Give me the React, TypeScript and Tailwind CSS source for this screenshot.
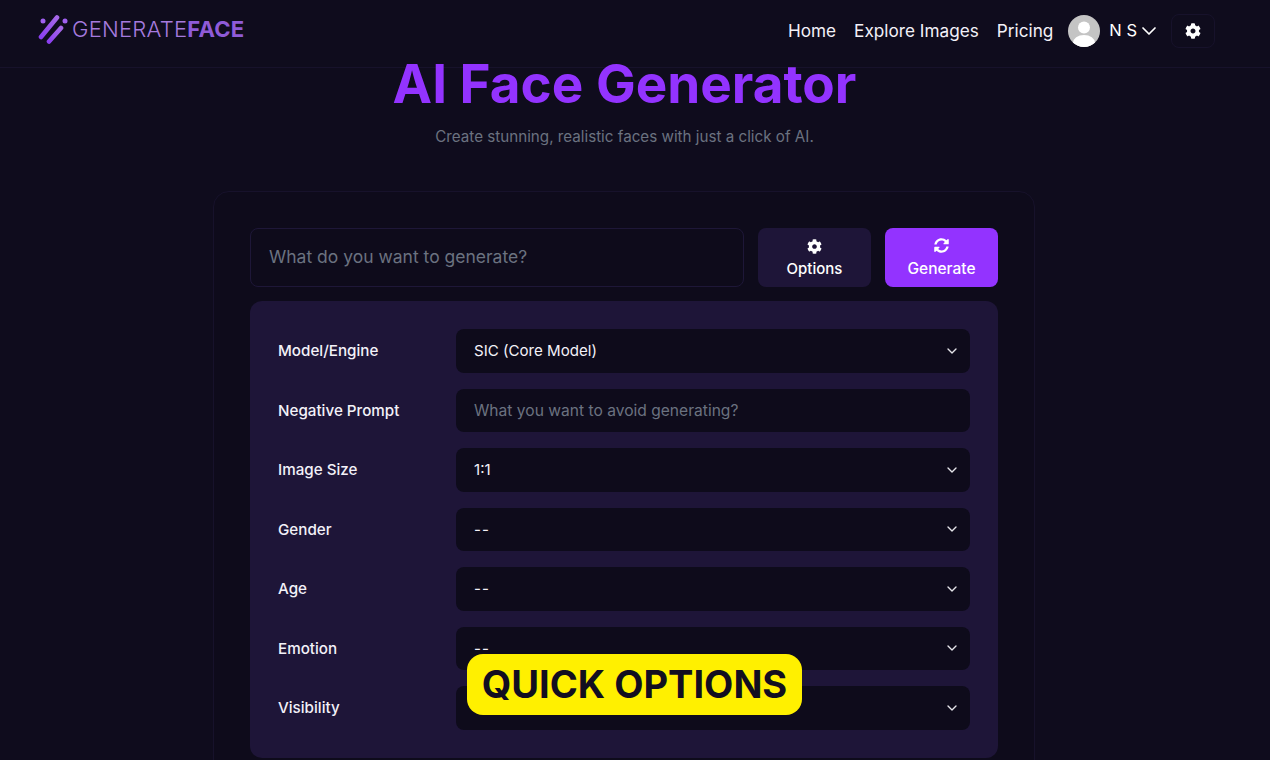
import { ChevronDown } from "lucide-react";
import { FaCog, FaSyncAlt } from "react-icons/fa";

const font = { fontFamily: "Inter, 'Noto Sans', sans-serif" };

function Logo() {
  return (
    <svg width="30" height="30" viewBox="0 0 30 30" className="shrink-0">
      <defs>
        <linearGradient id="lg" x1="0" y1="1" x2="1" y2="0">
          <stop offset="0" stopColor="#8b3ff0" />
          <stop offset="1" stopColor="#a668e8" />
        </linearGradient>
      </defs>
      <circle cx="5" cy="7" r="2.5" fill="#a060f0" />
      <circle cx="27" cy="7" r="2.5" fill="#a060f0" />
      <line x1="3" y1="23" x2="19" y2="3.5" stroke="url(#lg)" strokeWidth="4.6" strokeLinecap="round" />
      <line x1="11" y1="27.5" x2="23" y2="14" stroke="url(#lg)" strokeWidth="4.6" strokeLinecap="round" />
    </svg>
  );
}

function Avatar() {
  return (
    <svg width="32" height="32" viewBox="0 0 32 32" className="rounded-full shrink-0">
      <rect width="32" height="32" fill="#c4c4c4" />
      <circle cx="16" cy="12.5" r="6" fill="#fff" />
      <ellipse cx="16" cy="28" rx="11" ry="8" fill="#fff" />
    </svg>
  );
}

function Row({ label, value, placeholder }: { label: string; value?: string; placeholder?: string }) {
  return (
    <div className="flex items-center h-[43.5px]">
      <div className="w-[178px] pt-[2px] text-[15.2px] font-[450] text-[#f3f1f8]">{label}</div>
      <div className="flex-1 h-full rounded-lg bg-[#0e0b1b] flex items-center justify-between pl-[18px] pr-[10px] text-[15.1px]">
        {placeholder ? (
          <span className="text-[15.6px] text-[#6b7280]">{placeholder}</span>
        ) : (
          <>
            <span className={value === "--" ? "pt-[2px] tracking-[1px] text-[#f3f1f8]" : "pt-[2px] text-[#f3f1f8]"}>{value}</span>
            <ChevronDown size={16} strokeWidth={2} className="text-[#e5e5ea]" />
          </>
        )}
      </div>
    </div>
  );
}

export default function App() {
  return (
    <div style={font} className="relative h-[760px] overflow-hidden bg-[#0f0c1d] text-white">
      <header className="h-[68px] border-b border-[#17122b] flex items-center justify-between pl-[38px] pr-[55px]">
        <div className="flex items-center gap-[4px] -mt-[8px]">
          <Logo />
          <span className="text-[22.1px] font-light tracking-[0.2px] text-[#a57ade]">
            GENERATE<span className="font-bold text-[#8f5bd8]">FACE</span>
          </span>
        </div>
        <div className="flex items-center -mt-[6px]">
          <nav className="flex items-center gap-[18px] text-[17.2px] text-[#f3f1f8]">
            <span>Home</span>
            <span>Explore Images</span>
            <span>Pricing</span>
          </nav>
          <div className="flex items-center ml-[15px]">
            <Avatar />
            <span className="ml-[9px] text-[16.5px]">N S</span>
            <ChevronDown size={24} strokeWidth={1.7} />
          </div>
          <div className="ml-[10px] w-[44px] h-[34px] rounded-lg border border-[#17122b] flex items-center justify-center">
            <FaCog size={16} />
          </div>
        </div>
      </header>

      <div className="w-[1249px]">
        <h1 className="text-center text-[53px] leading-[36px] font-bold text-[#9333ff] -mt-[2px] h-[36px]">
          AI Face Generator
        </h1>
        <p className="text-center text-[15.2px] leading-[20px] text-[#6b7280] mt-[25px]">
          Create stunning, realistic faces with just a click of AI.
        </p>
      </div>

      <main className="mt-[44px] w-[822px] ml-[213px] h-[600px] rounded-2xl border border-[#17122b] bg-[#0e0b1b] px-[36px] pt-[36px]">
        <div className="flex gap-[14px] h-[59px]">
          <div className="flex-1 rounded-lg border border-[#1e1738] flex items-center pl-[18px] text-[17.5px] text-[#6b7280]">
            What do you want to generate?
          </div>
          <button className="w-[113px] pt-[4px] rounded-lg bg-[#1e1538] flex flex-col items-center justify-center gap-[4px] text-[15px] font-medium">
            <FaCog size={15} />
            Options
          </button>
          <button className="w-[113px] pt-[4px] rounded-lg bg-[#9333ff] flex flex-col items-center justify-center gap-[4px] text-[15.5px] font-medium">
            <FaSyncAlt size={15} />
            Generate
          </button>
        </div>
        <div className="mt-[14px] rounded-xl bg-[#1e1538] pl-[28px] pr-[28px] py-[28px] flex flex-col gap-[16px]">
          <Row label="Model/Engine" value="SIC (Core Model)" />
          <Row label="Negative Prompt" placeholder="What you want to avoid generating?" />
          <Row label="Image Size" value="1:1" />
          <Row label="Gender" value="--" />
          <Row label="Age" value="--" />
          <Row label="Emotion" value="--" />
          <Row label="Visibility" value="" />
        </div>
      </main>

      <div className="absolute left-[467px] top-[654px] w-[335px] h-[61px] pb-[1px] rounded-2xl bg-[#fff000] flex items-center justify-center text-[38px] font-bold text-[#120e20]">
        QUICK OPTIONS
      </div>
    </div>
  );
}
